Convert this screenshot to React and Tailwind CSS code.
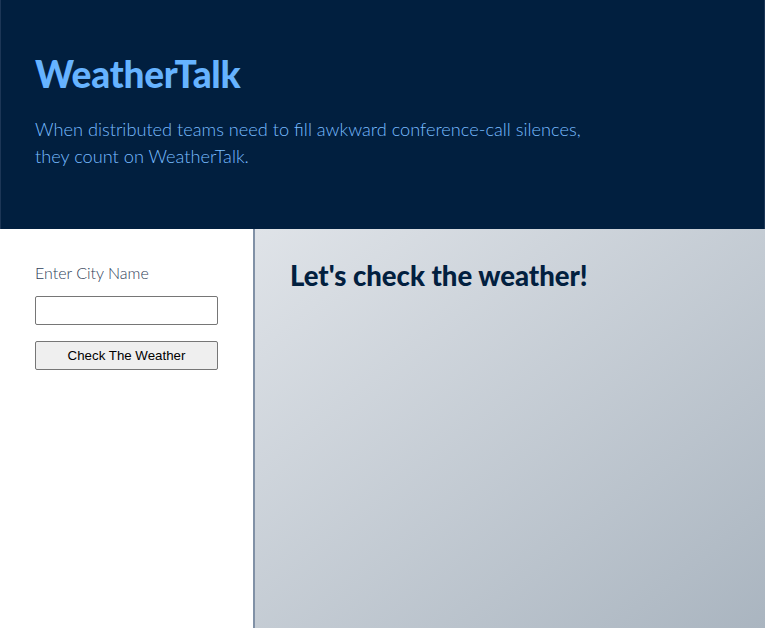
export default function App() {
  return (
    <div className="w-[765px] h-[628px] flex flex-col font-['Lato','Noto_Sans',sans-serif] overflow-hidden">
      <header className="h-[229px] shrink-0 bg-[#011f3f] border-x border-[#1c3656] px-[34px] pt-[51px]">
        <h1 className="text-[37px] leading-[46px] font-black text-[#66b3ff] tracking-[-0.2px]">WeatherTalk</h1>
        <p className="mt-[19px] text-[18.2px] leading-[27px] font-light text-[#78bcff] w-[580px]">
          When distributed teams need to fill awkward conference-call silences, they count on WeatherTalk.
        </p>
      </header>
      <div className="flex flex-1">
        <aside className="w-[253px] shrink-0 bg-white pl-[35px] pt-[33px]">
          <label className="block text-[16px] leading-[22px] font-light text-[#2f4159]">Enter City Name</label>
          <input className="mt-[12px] block w-[183px] h-[29px] border border-[#767676] rounded-[2px] bg-white" />
          <button className="mt-[16px] block w-[183px] h-[29px] border border-[#767676] rounded-[2px] bg-[#efefef] font-['Liberation_Sans',Arial,sans-serif] text-[13.3px] text-black">
            Check The Weather
          </button>
        </aside>
        <main className="flex-1 border-l-2 border-[#8191a6] bg-[linear-gradient(to_bottom_right,#dfe3e8,#aab5c0)] pl-[35px] pt-[29px]">
          <h2 className="text-[27.5px] leading-[36px] font-black text-[#02203f]">Let's check the weather!</h2>
        </main>
      </div>
    </div>
  );
}
